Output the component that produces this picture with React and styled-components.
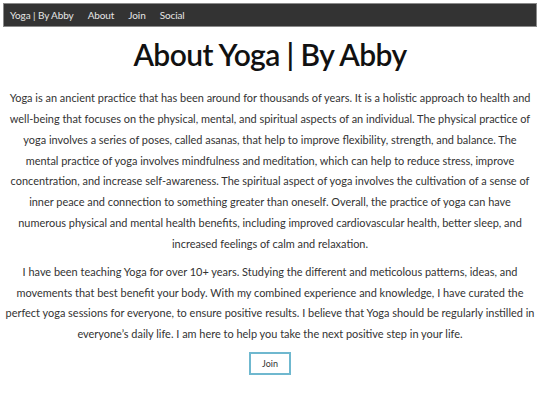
import React from "react";
import styled, { createGlobalStyle } from "styled-components";

const Global = createGlobalStyle`
  html, body { margin: 0; padding: 0; background: #fff; }
  body { font-family: "Lato", "Noto Sans", sans-serif; color: #222; }
`;

const Page = styled.div`
  display: flex;
  flex-direction: column;
  padding: 3px;
`;

const Nav = styled.nav`
  display: flex;
  align-items: center;
  gap: 14px;
  height: 22px;
  padding: 0 6px;
  background: #333;
  border: 1px solid #8a8a8a;
`;

const NavLink = styled.a`
  color: #e6e6e6;
  font-size: 10px;
  letter-spacing: -0.1px;
  text-decoration: none;
`;

const Main = styled.main`
  display: flex;
  flex-direction: column;
  align-items: center;
  padding: 0 2px;
  text-align: center;
`;

const Title = styled.h1`
  margin: 7px 0 14px;
  font-size: 30px;
  font-weight: 600;
  letter-spacing: -0.6px;
  line-height: 40px;
  color: #111;
`;

const Para = styled.p`
  margin: 0 0 ${(p) => p.$gap || "7px"};
  font-size: 10.95px;
  line-height: 20.85px;
  letter-spacing: 0;
  color: #333;
  white-space: nowrap;
`;

const JoinButton = styled.button`
  margin-top: 7px;
  width: 42px;
  height: 23px;
  padding: 0;
  background: #fff;
  border: 2px solid #6fb8cf;
  font-family: inherit;
  font-size: 9px;
  color: #333;
  cursor: pointer;
`;

export default function App() {
  return (
    <>
      <Global />
      <Page>
        <Nav>
          <NavLink href="#">Yoga | By Abby</NavLink>
          <NavLink href="#">About</NavLink>
          <NavLink href="#">Join</NavLink>
          <NavLink href="#">Social</NavLink>
        </Nav>
        <Main>
          <Title>About Yoga | By Abby</Title>
          <Para>
            Yoga is an ancient practice that has been around for thousands of years. It is a holistic approach to health and<br />
            well-being that focuses on the physical, mental, and spiritual aspects of an individual. The physical practice of<br />
            yoga involves a series of poses, called asanas, that help to improve flexibility, strength, and balance. The<br />
            mental practice of yoga involves mindfulness and meditation, which can help to reduce stress, improve<br />
            concentration, and increase self-awareness. The spiritual aspect of yoga involves the cultivation of a sense of<br />
            inner peace and connection to something greater than oneself. Overall, the practice of yoga can have<br />
            numerous physical and mental health benefits, including improved cardiovascular health, better sleep, and<br />
            increased feelings of calm and relaxation.
          </Para>
          <Para $gap="0">
            I have been teaching Yoga for over 10+ years. Studying the different and meticolous patterns, ideas, and<br />
            movements that best benefit your body. With my combined experience and knowledge, I have curated the<br />
            perfect yoga sessions for everyone, to ensure positive results. I believe that Yoga should be regularly instilled in<br />
            everyone’s daily life. I am here to help you take the next positive step in your life.
          </Para>
          <JoinButton>Join</JoinButton>
        </Main>
      </Page>
    </>
  );
}
